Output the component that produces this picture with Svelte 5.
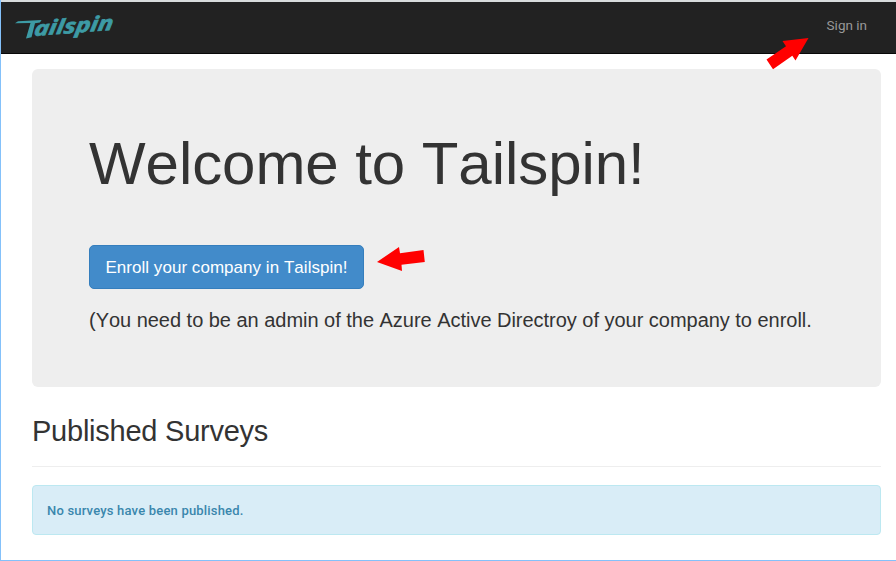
<script>
  const title = 'Tailspin';
</script>

<div class="page">
  <header>
    <a class="brand" href="#home" aria-label={title}>
      <svg width="100" height="26" viewBox="0 0 100 26">
        <path d="M0 9.2 L3 7.2 L26.5 6 L25 8.6 L20 9.2 L16.5 23.2 L11 24.5 L15.5 9 Z" />
        <text transform="translate(18.5 22) rotate(-4.5) skewX(-13)" textLength="79" lengthAdjust="spacingAndGlyphs">ailspin</text>
      </svg>
    </a>
    <a class="signin" href="#signin">Sign in</a>
  </header>
  <main>
    <section class="hero">
      <h1>Welcome to {title}!</h1>
      <a class="button" href="#enroll">Enroll your company in {title}!</a>
      <p>(You need to be an admin of the Azure Active Directroy of your company to enroll.</p>
    </section>
    <h2>Published Surveys</h2>
    <div class="alert"><span>No surveys have been published.</span></div>
  </main>
  <svg class="arrow" width="896" height="561" viewBox="0 0 896 561">
    <path d="M808.5 38 L795.5 60.5 L792.3 55.7 L773 69.3 L766.5 59.5 L786 46.3 L782.5 41 Z" />
    <path d="M377 262 L399 247 L400 253.3 L423.5 250 L424.8 262 L401.5 264.7 L402 271 Z" />
  </svg>
</div>

<style>
  :global(body) { margin: 0; background: #fff; }
  .page {
    box-sizing: border-box;
    position: relative;
    width: 896px;
    height: 561px;
    overflow: hidden;
    border-left: 1px solid #84c1fa;
    border-bottom: 1px solid #84c1fa;
    font-family: "Liberation Sans", Arial, sans-serif;
    font-kerning: none;
    color: #333;
  }
  a { text-decoration: none; }
  header {
    box-sizing: border-box;
    display: flex;
    justify-content: space-between;
    height: 54px;
    border-top: 2px solid #d8dcdd;
    border-bottom: 1px solid #080808;
    background: #222;
    padding: 0 29px 0 14px;
  }
  .brand { margin-top: 12px; height: 26px; }
  .brand svg { display: block; overflow: visible; fill: #3d9ba5; }
  .brand text { font: italic bold 20px "Open Sans", sans-serif; stroke: #3d9ba5; stroke-width: 0.7; }
  .signin {
    font: 13.5px/20px Roboto, sans-serif;
    color: #999;
    margin-top: 13px;
  }
  main { padding: 15px 15px 0 31px; }
  .hero {
    box-sizing: border-box;
    height: 318px;
    background: #eee;
    border-radius: 6px;
    padding: 62px 57px 0;
  }
  h1 { margin: 0; font-size: 60px; line-height: 66px; font-weight: 400; letter-spacing: -0.06px; white-space: nowrap; }
  .button {
    box-sizing: border-box;
    display: flex;
    align-items: center;
    justify-content: center;
    width: 275px;
    height: 44px;
    margin-top: 48px;
    padding-top: 1px;
    background: #428bca;
    border: 1px solid #357ebd;
    border-radius: 5px;
    color: #fff;
    font-size: 17px;
    letter-spacing: 0.04px;
    white-space: nowrap;
  }
  p { margin: 16px 0 0; font-size: 20px; line-height: 30px; letter-spacing: -0.025px; white-space: nowrap; }
  h2 {
    margin: 28px 0 18px;
    padding-bottom: 19px;
    border-bottom: 1px solid #eee;
    font-size: 29px;
    line-height: 32px;
    font-weight: 400;
    letter-spacing: -0.24px;
  }
  .alert {
    box-sizing: border-box;
    height: 50px;
    padding: 15px 14px 13px;
    border: 1px solid #bce8f1;
    border-radius: 4px;
    background: #d9edf7;
    color: #3a87ad;
    font: 500 13px/20px Roboto, sans-serif;
    letter-spacing: 0.19px;
  }
  .arrow { position: absolute; left: -1px; top: 0; pointer-events: none; fill: #f00; }
</style>
